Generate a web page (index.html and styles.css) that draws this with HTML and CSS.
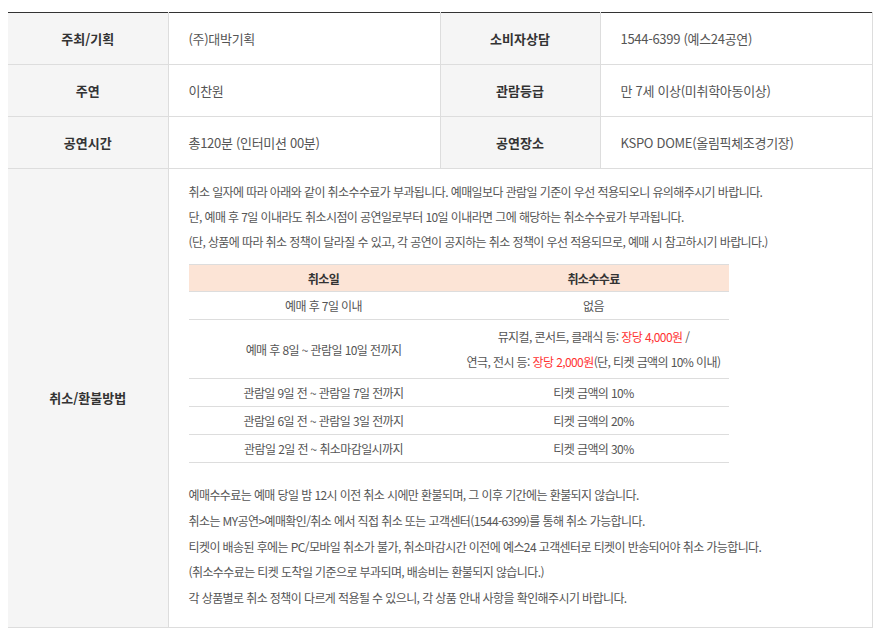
FILE: index.html
```html
<!DOCTYPE html>
<html lang="ko">
<head>
<meta charset="utf-8">
<link rel="stylesheet" href="styles.css">
</head>
<body>
<div class="wrap">
  <table class="info">
    <colgroup>
      <col class="c-th"><col class="c-td"><col class="c-th"><col class="c-td">
    </colgroup>
    <tbody>
      <tr>
        <th>주최/기획</th>
        <td>(주)대박기획</td>
        <th>소비자상담</th>
        <td>1544-6399 (예스24공연)</td>
      </tr>
      <tr>
        <th>주연</th>
        <td>이찬원</td>
        <th>관람등급</th>
        <td>만 7세 이상(미취학아동이상)</td>
      </tr>
      <tr>
        <th>공연시간</th>
        <td>총120분 (인터미션 00분)</td>
        <th>공연장소</th>
        <td>KSPO DOME(올림픽체조경기장)</td>
      </tr>
      <tr>
        <th>취소/환불방법</th>
        <td colspan="3" class="cancel">
          <div class="intro">
            <p>취소 일자에 따라 아래와 같이 취소수수료가 부과됩니다. 예매일보다 관람일 기준이 우선 적용되오니 유의해주시기 바랍니다.</p>
            <p>단, 예매 후 7일 이내라도 취소시점이 공연일로부터 10일 이내라면 그에 해당하는 취소수수료가 부과됩니다.</p>
            <p>(단, 상품에 따라 취소 정책이 달라질 수 있고, 각 공연이 공지하는 취소 정책이 우선 적용되므로, 예매 시 참고하시기 바랍니다.)</p>
          </div>
          <table class="fee">
            <thead>
              <tr><th>취소일</th><th>취소수수료</th></tr>
            </thead>
            <tbody>
              <tr><td>예매 후 7일 이내</td><td>없음</td></tr>
              <tr class="tall"><td>예매 후 8일 ~ 관람일 10일 전까지</td><td>뮤지컬, 콘서트, 클래식 등: <span class="red">장당 4,000원</span> /<br>연극, 전시 등: <span class="red">장당 2,000원</span>(단, 티켓 금액의 10% 이내)</td></tr>
              <tr><td>관람일 9일 전 ~ 관람일 7일 전까지</td><td>티켓 금액의 10%</td></tr>
              <tr><td>관람일 6일 전 ~ 관람일 3일 전까지</td><td>티켓 금액의 20%</td></tr>
              <tr><td>관람일 2일 전 ~ 취소마감일시까지</td><td>티켓 금액의 30%</td></tr>
            </tbody>
          </table>
          <div class="notes">
            <p>예매수수료는 예매 당일 밤 12시 이전 취소 시에만 환불되며, 그 이후 기간에는 환불되지 않습니다.</p>
            <p>취소는 MY공연&gt;예매확인/취소 에서 직접 취소 또는 고객센터(1544-6399)를 통해 취소 가능합니다.</p>
            <p>티켓이 배송된 후에는 PC/모바일 취소가 불가, 취소마감시간 이전에 예스24 고객센터로 티켓이 반송되어야 취소 가능합니다.</p>
            <p>(취소수수료는 티켓 도착일 기준으로 부과되며, 배송비는 환불되지 않습니다.)</p>
            <p>각 상품별로 취소 정책이 다르게 적용될 수 있으니, 각 상품 안내 사항을 확인해주시기 바랍니다.</p>
          </div>
        </td>
      </tr>
    </tbody>
  </table>
</div>
</body>
</html>
```
FILE: styles.css
```css
html, body {
  margin: 0;
  padding: 0;
  background: #fff;
}
body {
  font-family: "Noto Sans CJK KR", "Noto Sans", sans-serif;
  color: #555;
}
.wrap {
  padding: 12px 13px 0 8px;
}
.info {
  width: 864px;
  border-collapse: collapse;
  border-top: 1px solid #333;
  table-layout: fixed;
}
.c-th { width: 160px; }
.c-td { width: 272px; }
.info > tbody > tr > th,
.info > tbody > tr > td {
  border-bottom: 1px solid #ddd;
  border-right: 1px solid #ddd;
  height: 51px;
  padding: 0;
  vertical-align: middle;
}
.info > tbody > tr > th {
  background: #f5f5f5;
  color: #333;
  font-size: 13px;
  font-weight: bold;
  text-align: center;
}
.info > tbody > tr > td {
  font-size: 13px;
  letter-spacing: -0.3px;
  padding-left: 20px;
  text-align: left;
}
.info > tbody > tr > td.cancel {
  padding: 10px 20px 16px 20px;
  font-size: 12px;
  letter-spacing: -0.6px;
  vertical-align: top;
}
.intro p, .notes p {
  margin: 0;
  line-height: 25px;
}
.notes {
  margin-top: 19px;
}
.notes p {
  line-height: 25.8px;
}
.fee {
  margin-top: 10px;
  width: 540px;
  border-collapse: collapse;
  table-layout: fixed;
}
.fee th, .fee td {
  text-align: center;
  padding: 0;
  font-size: 12px;
  border-bottom: 1px solid #ddd;
  height: 27px;
}
.fee th {
  height: 26px;
  background: #fce4d6;
  color: #333;
  font-weight: bold;
  border-top: 1px solid #ddd;
}
.fee td {
  color: #555;
}
.fee tr.tall td {
  height: 58px;
  line-height: 25px;
}
.red {
  color: #f33;
}
```
